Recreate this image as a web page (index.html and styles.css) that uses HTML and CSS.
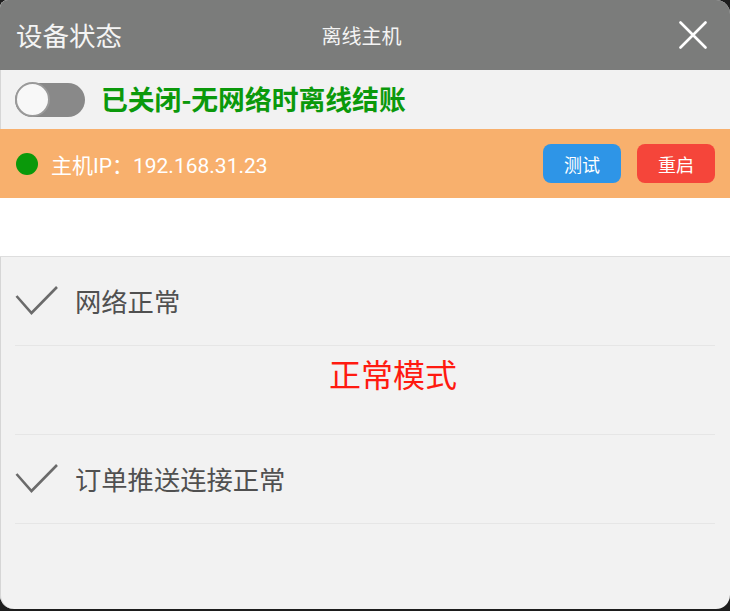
FILE: index.html
```html
<!DOCTYPE html>
<html lang="zh">
<head>
<meta charset="utf-8">
<link rel="stylesheet" href="styles.css">
</head>
<body>
<div class="dialog">
  <div class="header">
    <div class="title">设备状态</div>
    <div class="subtitle">离线主机</div>
    <div class="close">
      <svg width="28" height="28" viewBox="0 0 28 28"><path d="M1.5 1.5 L26.5 26.5 M26.5 1.5 L1.5 26.5" stroke="#fff" stroke-width="2.6" stroke-linecap="round" fill="none"/></svg>
    </div>
  </div>
  <div class="toggle-row">
    <div class="switch"><span class="thumb"></span></div>
    <div class="offline-text">已关闭-无网络时离线结账</div>
  </div>
  <div class="host-row">
    <span class="dot"></span>
    <span class="ip">主机IP：192.168.31.23</span>
    <div class="actions">
      <button class="btn btn-blue">测试</button>
      <button class="btn btn-red">重启</button>
    </div>
  </div>
  <div class="blank"></div>
  <div class="list">
    <div class="item">
      <svg class="check" width="44" height="32" viewBox="0 0 44 32"><polyline points="1.5,11 16.5,28 42,2" stroke="#6b6b6b" stroke-width="2.6" fill="none" stroke-linejoin="miter"/></svg>
      <span class="label">网络正常</span>
    </div>
    <div class="item mode">
      <span></span>
      <span class="mode-text">正常模式</span>
    </div>
    <div class="item">
      <svg class="check" width="44" height="32" viewBox="0 0 44 32"><polyline points="1.5,11 16.5,28 42,2" stroke="#6b6b6b" stroke-width="2.6" fill="none" stroke-linejoin="miter"/></svg>
      <span class="label">订单推送连接正常</span>
    </div>
  </div>
</div>
</body>
</html>
```

FILE: styles.css
```css
html, body {
  margin: 0;
  padding: 0;
  background: #1d1d1d;
}
body {
  width: 730px;
  height: 611px;
  overflow: hidden;
  font-family: Roboto, "Noto Sans CJK SC", sans-serif;
}
.dialog {
  width: 730px;
  height: 609px;
  background: #f2f2f2;
  border-radius: 8px 14px 14px 14px;
  overflow: hidden;
  display: flex;
  flex-direction: column;
  box-shadow: inset 1px 0 0 #d6d6d6;
}
.header {
  height: 70px;
  flex: none;
  background: #7b7c7b;
  display: grid;
  grid-template-columns: 1fr auto 1fr;
  align-items: center;
  padding: 0 23px 0 16px;
}
.title {
  color: #f4f4f4;
  font-size: 26.5px;
  font-family: "Noto Sans CJK SC", sans-serif;
  margin-top: -1px;
}
.subtitle {
  color: #f4f4f4;
  font-size: 20px;
  font-family: "Noto Sans CJK SC", sans-serif;
}
.close {
  justify-self: end;
  display: flex;
  align-items: center;
}
.toggle-row {
  height: 59px;
  flex: none;
  display: flex;
  align-items: center;
  padding-left: 15px;
  gap: 16px;
}
.switch {
  width: 70px;
  height: 34px;
  border-radius: 17px;
  background: #898989;
  position: relative;
  flex: none;
}
.thumb {
  position: absolute;
  left: 0;
  top: -0.5px;
  width: 31px;
  height: 31px;
  border-radius: 50%;
  background: #f8f8f8;
  border: 2px solid #9a9a9a;
}
.offline-text {
  color: #0b990b;
  font-size: 26.8px;
  font-weight: bold;
  font-family: "Noto Sans CJK SC", sans-serif;
  margin-top: -2px;
}
.host-row {
  height: 69px;
  flex: none;
  background: #f8b06d;
  display: flex;
  align-items: center;
  padding: 0 15px 0 16px;
}
.dot {
  width: 22px;
  height: 22px;
  border-radius: 50%;
  background: #0a990a;
  flex: none;
}
.ip {
  margin-left: 13px;
  color: #fff;
  font-size: 21px;
  font-family: Roboto, "Noto Sans CJK SC", sans-serif;
}
.actions {
  margin-left: auto;
  display: flex;
  gap: 16px;
}
.btn {
  width: 78px;
  height: 39px;
  border: none;
  border-radius: 8px;
  color: #fff;
  font-size: 18px;
  font-family: "Noto Sans CJK SC", sans-serif;
  padding: 0;
  display: flex;
  align-items: center;
  justify-content: center;
}
.btn-blue {
  background: #2e95e7;
}
.btn-red {
  background: #f5453a;
}
.blank {
  height: 58px;
  flex: none;
  background: #ffffff;
  border-bottom: 1px solid #dedede;
}
.list {
  padding: 0 15px;
}
.item {
  height: 88px;
  border-bottom: 1px solid #e6e6e6;
  display: grid;
  grid-template-columns: 60px 1fr;
  align-items: center;
}
.check {
  margin-left: 0;
  margin-top: -1px;
}
.label {
  color: #505050;
  font-size: 26.3px;
  font-family: "Noto Sans CJK SC", sans-serif;
  margin-top: -2px;
}
.mode {
  align-items: start;
}
.mode-text {
  text-align: center;
  color: #ff1a10;
  font-size: 32px;
  line-height: 38px;
  padding-top: 8px;
  font-family: "Noto Sans CJK SC", sans-serif;
  margin-right: 4px;
}
```
